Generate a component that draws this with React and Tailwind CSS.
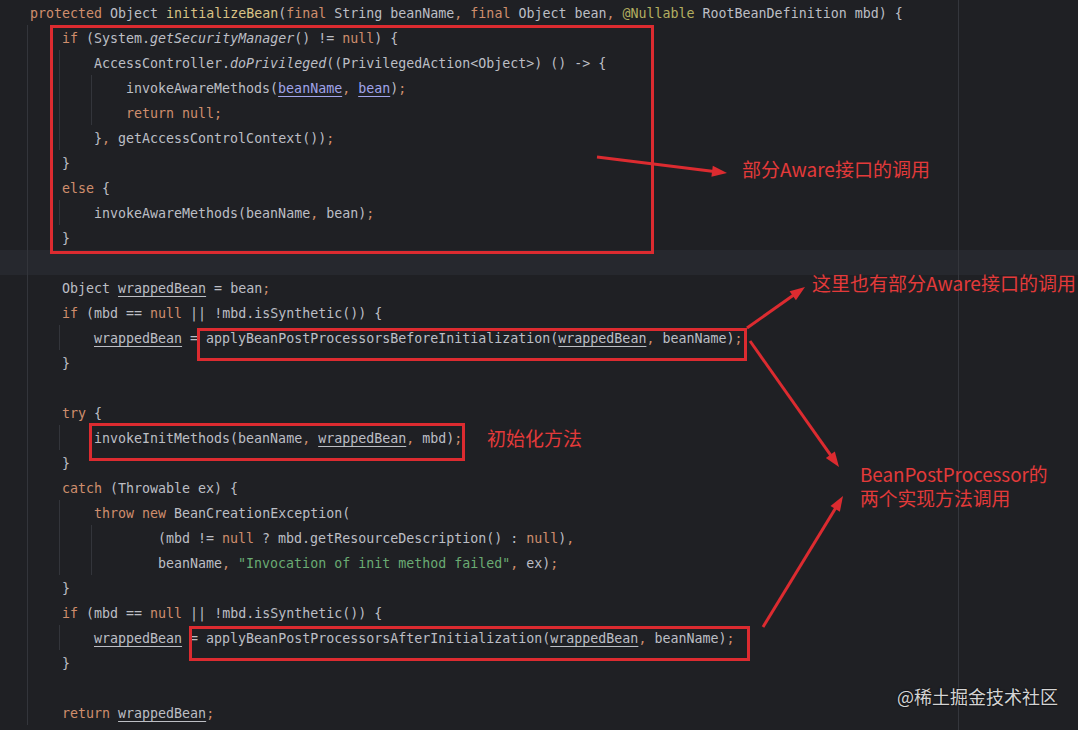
import React from "react";

const C = {
  t: "text-[#bcbec4]",
  k: "text-[#cf8e6d]",
  f: "text-[#d9c285]",
  a: "text-[#b3ae60]",
  s: "text-[#6aab73]",
  v: "text-[#a0a4ea] underline decoration-1 underline-offset-[3px]",
  u: "text-[#bcbec4] underline decoration-1 underline-offset-[3px]",
  i: "text-[#bcbec4] italic",
};

const ifLine = [["if", "k"], [" (mbd == ", "t"], ["null", "k"], [" || !mbd.isSynthetic()) {", "t"]];

// [level, guides, tokens, highlighted]
const lines = [
  [0, 0, [["protected", "k"], [" Object ", "t"], ["initializeBean", "f"], ["(", "t"], ["final", "k"], [" String beanName", "t"], [",", "k"], [" ", "t"], ["final", "k"], [" Object bean", "t"], [",", "k"], [" ", "t"], ["@Nullable", "a"], [" RootBeanDefinition mbd) {", "t"]]],
  [1, 1, [["if", "k"], [" (System.", "t"], ["getSecurityManager", "i"], ["() != ", "t"], ["null", "k"], [") {", "t"]]],
  [2, 2, [["AccessController.", "t"], ["doPrivileged", "i"], ["((PrivilegedAction<Object>) () -> {", "t"]]],
  [3, 3, [["invokeAwareMethods(", "t"], ["beanName", "v"], [",", "k"], [" ", "t"], ["bean", "v"], [")", "t"], [";", "k"]]],
  [3, 3, [["return null", "k"], [";", "k"]]],
  [2, 2, [["}", "t"], [",", "k"], [" getAccessControlContext())", "t"], [";", "k"]]],
  [1, 1, [["}", "t"]]],
  [1, 1, [["else", "k"], [" {", "t"]]],
  [2, 2, [["invokeAwareMethods(beanName", "t"], [",", "k"], [" bean)", "t"], [";", "k"]]],
  [1, 1, [["}", "t"]]],
  [1, 1, [], true],
  [1, 1, [["Object ", "t"], ["wrappedBean", "u"], [" = bean", "t"], [";", "k"]]],
  [1, 1, ifLine],
  [2, 2, [["wrappedBean", "u"], [" = applyBeanPostProcessorsBeforeInitialization(", "t"], ["wrappedBean", "u"], [",", "k"], [" beanName)", "t"], [";", "k"]]],
  [1, 1, [["}", "t"]]],
  [1, 1, []],
  [1, 1, [["try", "k"], [" {", "t"]]],
  [2, 2, [["invokeInitMethods(beanName", "t"], [",", "k"], [" ", "t"], ["wrappedBean", "u"], [",", "k"], [" mbd)", "t"], [";", "k"]]],
  [1, 1, [["}", "t"]]],
  [1, 1, [["catch", "k"], [" (Throwable ex) {", "t"]]],
  [2, 2, [["throw new", "k"], [" BeanCreationException(", "t"]]],
  [4, 3, [["(mbd != ", "t"], ["null", "k"], [" ? mbd.getResourceDescription() : ", "t"], ["null", "k"], [")", "t"], [",", "k"]]],
  [4, 3, [["beanName", "t"], [",", "k"], [" ", "t"], ['"Invocation of init method failed"', "s"], [",", "k"], [" ex)", "t"], [";", "k"]]],
  [1, 1, [["}", "t"]]],
  [1, 1, ifLine],
  [2, 2, [["wrappedBean", "u"], [" = applyBeanPostProcessorsAfterInitialization(", "t"], ["wrappedBean", "u"], [",", "k"], [" beanName)", "t"], [";", "k"]]],
  [1, 1, [["}", "t"]]],
  [1, 1, []],
  [1, 1, [["return", "k"], [" ", "t"], ["wrappedBean", "u"], [";", "k"]]],
];

const CodeLine = ({ level, guides, tokens, hl }) => (
  <div className={`flex h-[25px] items-stretch ${hl ? "bg-[#26282e]" : ""}`}>
    <span className="w-[27px] shrink-0" />
    {Array.from({ length: guides }).map((_, i) => (
      <span key={i} className="w-[32px] shrink-0 border-l border-[#33353b]" />
    ))}
    <span className="shrink-0" style={{ width: (level - guides) * 32 + 3 }} />
    <span className="whitespace-pre leading-[25px] pt-px">
      {tokens.map(([text, c], i) => (
        <span key={i} className={C[c]}>
          {text}
        </span>
      ))}
    </span>
  </div>
);

const RED = "#dc2b30";

const Arrow = ({ x1, y1, x2, y2 }) => {
  const dx = x2 - x1;
  const dy = y2 - y1;
  const len = Math.hypot(dx, dy);
  const ux = dx / len;
  const uy = dy / len;
  const hl = 15;
  const hw = 5.5;
  const bx = x2 - ux * hl;
  const by = y2 - uy * hl;
  const pts = `${x2},${y2} ${bx - uy * hw},${by + ux * hw} ${bx + uy * hw},${by - ux * hw}`;
  return (
    <g>
      <line x1={x1} y1={y1} x2={bx + ux * 2} y2={by + uy * 2} stroke={RED} strokeWidth="3" />
      <polygon points={pts} fill={RED} />
    </g>
  );
};

const Box = ({ className }) => (
  <div className={`absolute border-[3px] border-[#dc2b30] ${className}`} />
);

export default function App() {
  return (
    <div className="relative w-[1078px] h-[730px] overflow-hidden bg-[#1f2024] font-['DejaVu_Sans_Mono',monospace] text-[13.3px]">
      <div className="flex flex-col">
        {lines.map(([level, guides, tokens, hl], i) => (
          <CodeLine key={i} level={level} guides={guides} tokens={tokens} hl={hl} />
        ))}
      </div>

      {/* right margin guide */}
      <div className="absolute top-0 bottom-0 left-[958px] w-px bg-[#34363c]" />

      {/* annotation boxes */}
      <Box className="left-[50px] top-[25px] w-[604px] h-[229px]" />
      <Box className="left-[197px] top-[328px] w-[550px] h-[33px]" />
      <Box className="left-[89px] top-[423px] w-[376px] h-[38px]" />
      <Box className="left-[189px] top-[626px] w-[561px] h-[35px]" />

      <svg className="absolute inset-0 pointer-events-none" width="1078" height="730" viewBox="0 0 1078 730">
        <Arrow x1={597} y1={157} x2={727} y2={173} />
        <Arrow x1={747} y1={328} x2={805} y2={287} />
        <Arrow x1={750} y1={341} x2={839} y2={467} />
        <Arrow x1={763} y1={627} x2={843} y2={496} />
      </svg>

      <div className="absolute inset-0 pointer-events-none font-['Noto_Sans_CJK_SC',sans-serif] text-[#e33a3a] text-[19px] leading-[23px]">
        <div className="absolute left-[742px] top-[157px]">部分Aware接口的调用</div>
        <div className="absolute left-[812px] top-[271px]">这里也有部分Aware接口的调用</div>
        <div className="absolute left-[487px] top-[426px]">初始化方法</div>
        <div className="absolute left-[860px] top-[462px] flex flex-col text-[18.8px]">
          <span className="leading-[24px]">BeanPostProcessor的</span>
          <span className="leading-[24px]">两个实现方法调用</span>
        </div>
        <div className="absolute left-[897px] top-[685px] text-[18px] text-[#d4d4d4] [text-shadow:0_0_2px_#000]">
          @稀土掘金技术社区
        </div>
      </div>
    </div>
  );
}
